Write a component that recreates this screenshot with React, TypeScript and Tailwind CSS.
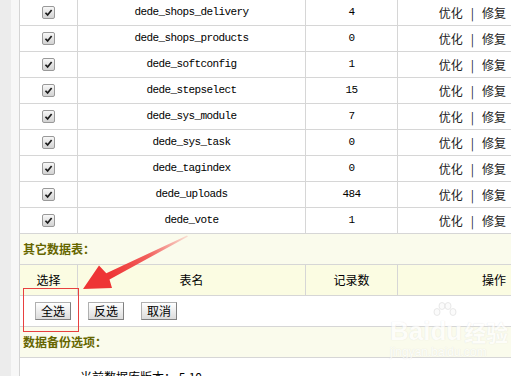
import React from 'react';

const tables = [
  { name: 'dede_shops_delivery', count: '4' },
  { name: 'dede_shops_products', count: '0' },
  { name: 'dede_softconfig', count: '1' },
  { name: 'dede_stepselect', count: '15' },
  { name: 'dede_sys_module', count: '7' },
  { name: 'dede_sys_task', count: '0' },
  { name: 'dede_tagindex', count: '0' },
  { name: 'dede_uploads', count: '484' },
  { name: 'dede_vote', count: '1' },
];

const cell = 'flex items-center justify-center border-r border-[#d6d6d6]';
const mono = "font-['Liberation_Mono',monospace] text-[11px] tracking-[-0.6px]";

function CheckBox() {
  return (
    <span className="flex h-[13px] w-[13px] items-center justify-center rounded-[2px] border border-[#999] bg-gradient-to-b from-[#f8f8f8] to-[#d2d2d2]">
      <svg viewBox="0 0 10 10" className="h-[9px] w-[9px]">
        <path d="M1.6 5.3 L4 7.7 L8.5 2.3" stroke="#1c1c1c" strokeWidth="1.9" fill="none" />
      </svg>
    </span>
  );
}

function Btn({ label }: { label: string }) {
  return (
    <button className="h-[18px] border border-[#b0b0b0] border-b-[#808080] border-r-[#808080] bg-gradient-to-b from-white to-[#dcdcdc] px-[5px] text-[12px] leading-[16px] text-black">
      {label}
    </button>
  );
}

function Ops() {
  return (
    <span className="flex items-center text-[#222]">
      优化<span className="mx-[8px]">|</span>修复
    </span>
  );
}

export default function App() {
  return (
    <div className="relative h-[376px] w-[511px] overflow-hidden bg-white font-['Noto_Sans_CJK_SC',sans-serif] text-[12px] text-black">
      <div className="flex h-full">
        <div className="w-[11px] bg-[#ececec]" />
        <div className="w-[8px] bg-[#f7f7f7]" />
        <div className="flex-1 border-l border-[#d4d4d4]">
          {tables.map((t) => (
            <div key={t.name} className="grid h-[26px] grid-cols-[58px_228px_92px_1fr] border-b border-[#d6d6d6]">
              <div className={cell}>
                <CheckBox />
              </div>
              <div className={`${cell} ${mono}`}>{t.name}</div>
              <div className={`${cell} ${mono}`}>{t.count}</div>
              <div className="flex items-center justify-end pr-[5px]">
                <Ops />
              </div>
            </div>
          ))}

          <div className="flex h-[31px] items-center border-b border-[#d6d6d6] bg-[#fafbec] pl-[3px] font-bold text-[#666600]">
            其它数据表：
          </div>

          <div className="grid h-[31px] grid-cols-[58px_228px_92px_1fr] border-b border-[#d6d6d6] bg-[#fbfce2]">
            <div className={cell}>选择</div>
            <div className={cell}>表名</div>
            <div className={cell}>记录数</div>
            <div className="flex items-center justify-end pr-[5px]">操作</div>
          </div>

          <div className="flex h-[31px] items-center gap-[17px] border-b border-[#d6d6d6] pl-[15px]">
            <Btn label="全选" />
            <Btn label="反选" />
            <Btn label="取消" />
          </div>

          <div className="flex h-[31px] items-center border-b border-[#d6d6d6] bg-[#fafbec] pl-[3px] font-bold text-[#666600]">
            数据备份选项：
          </div>

          <div className="pl-[60px] pt-[10px]">当前数据库版本： 5.10</div>
        </div>
      </div>

      {/* annotation */}
      <div className="absolute left-[23px] top-[288px] h-[44px] w-[56px] border border-[#e8403f]" />
      <svg className="absolute left-0 top-0" width="511" height="376">
        <defs>
          <linearGradient id="arr" gradientUnits="userSpaceOnUse" x1="188" y1="236" x2="110" y2="276">
            <stop offset="0" stopColor="#f04444" stopOpacity="0.15" />
            <stop offset="0.5" stopColor="#f03a3a" stopOpacity="0.8" />
            <stop offset="1" stopColor="#ee3535" stopOpacity="1" />
          </linearGradient>
        </defs>
        <polygon
          points="83,289 112,288 109.5,279.5 188,236.5 187,235.5 106.3,273.2 99,265.5"
          fill="url(#arr)"
        />
      </svg>

      {/* watermark */}
      <div className="absolute left-[390px] top-[316px] flex flex-col items-start text-white opacity-70 [text-shadow:0_0_1px_#d4d4d4]">
        <div className="flex items-end font-['Liberation_Sans',sans-serif] text-[26px] font-bold leading-[30px]">
          Bai
          <span className="relative">
            du
            <svg className="absolute -top-[14px] left-[2px]" width="26" height="18" viewBox="0 0 26 18">
              <g fill="#fafafa" stroke="#d8d8d8" strokeWidth="0.8">
                <ellipse cx="5" cy="10" rx="3" ry="3.5" />
                <ellipse cx="10" cy="4" rx="3" ry="3.5" />
                <ellipse cx="16" cy="4" rx="3" ry="3.5" />
                <ellipse cx="21" cy="10" rx="3" ry="3.5" />
              </g>
            </svg>
          </span>
          <span className="ml-[2px] font-['Noto_Sans_CJK_SC',sans-serif] text-[22px]">经验</span>
        </div>
        <div className="font-['Liberation_Sans',sans-serif] text-[12px] leading-[13px]">jingyan.baidu.com</div>
      </div>
    </div>
  );
}
